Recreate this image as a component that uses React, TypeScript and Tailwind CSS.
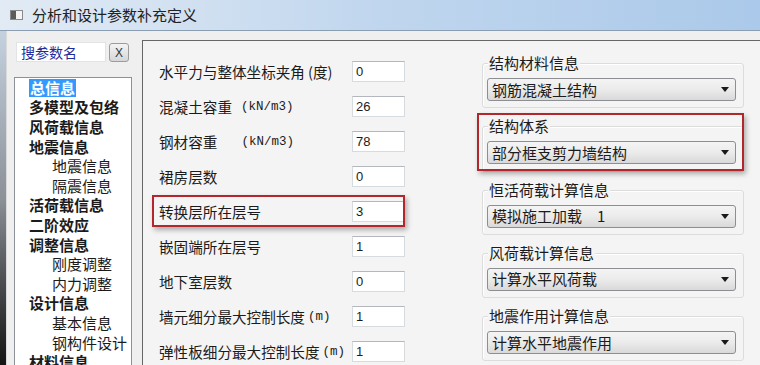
import React from 'react'

const cjk = "font-['Microsoft_YaHei','Noto_Sans_CJK_SC',sans-serif]"

const tree: { label: string; sub?: boolean; active?: boolean }[] = [
  { label: '总信息', active: true },
  { label: '多模型及包络' },
  { label: '风荷载信息' },
  { label: '地震信息' },
  { label: '地震信息', sub: true },
  { label: '隔震信息', sub: true },
  { label: '活荷载信息' },
  { label: '二阶效应' },
  { label: '调整信息' },
  { label: '刚度调整', sub: true },
  { label: '内力调整', sub: true },
  { label: '设计信息' },
  { label: '基本信息', sub: true },
  { label: '钢构件设计', sub: true },
  { label: '材料信息' },
]

const rows: { label: string; unit?: string; value: string; mark?: boolean }[] = [
  { label: '水平力与整体坐标夹角', unit: '(度)', value: '0' },
  { label: '混凝土容重', unit: '(kN/m3)', value: '26' },
  { label: '钢材容重', unit: '(kN/m3)', value: '78' },
  { label: '裙房层数', value: '0' },
  { label: '转换层所在层号', value: '3', mark: true },
  { label: '嵌固端所在层号', value: '1' },
  { label: '地下室层数', value: '0' },
  { label: '墙元细分最大控制长度', unit: '(m)', value: '1' },
  { label: '弹性板细分最大控制长度', unit: '(m)', value: '1' },
]

const groups: { title: string; value: string; mark?: boolean }[] = [
  { title: '结构材料信息', value: '钢筋混凝土结构' },
  { title: '结构体系', value: '部分框支剪力墙结构', mark: true },
  { title: '恒活荷载计算信息', value: '模拟施工加载　1' },
  { title: '风荷载计算信息', value: '计算水平风荷载' },
  { title: '地震作用计算信息', value: '计算水平地震作用' },
]

const Arrow = () => (
  <svg width="8" height="5" viewBox="0 0 8 5" className="shrink-0">
    <path d="M0 0H8L4 5Z" fill="#1a1a1a" />
  </svg>
)

const unitClass = (label: string, unit: string) => {
  if (unit === '(度)') return `ml-[3px] ${cjk} text-[14.6px]`
  if (unit === '(m)') return "ml-[3px] font-['Liberation_Mono',monospace] text-[12.5px]"
  return `font-['Liberation_Mono',monospace] text-[12.5px] ${label.length === 4 ? 'ml-[24px]' : 'ml-[9px]'}`
}

export default function App() {
  return (
    <div className={`flex h-[365px] w-[760px] flex-col overflow-hidden bg-[#efefef] text-[#1b1b1b] ${cjk}`}>
      {/* title bar */}
      <div className="flex h-[31px] shrink-0 items-center border-b border-[#8b9db1] bg-gradient-to-r from-[#e2ebf4] via-[#c0d6ee] to-[#abc9ea] pl-[10px]">
        <div className="flex h-[10px] w-[13px] border border-[#8a8a8a] bg-[#f4f4f4]">
          <div className="w-[5px] bg-[#5c5c5c]" />
        </div>
        <span className="ml-[9px] text-[15px] leading-[20px] text-[#222]">分析和设计参数补充定义</span>
      </div>

      <div className="flex min-h-0 flex-1">
        {/* window frame edge */}
        <div className="w-[7px] shrink-0 border-r border-[#d9d9d9] bg-gradient-to-b from-[#c4d2e0] via-[#8d9198] to-[#141414]" />

        {/* left tree column */}
        <div className="flex w-[135px] shrink-0 flex-col pl-[7px]">
          <div className="mt-[11px] flex items-start">
            <div className="ml-[2px] flex h-[20px] w-[90px] items-center border border-[#e3e3e3] bg-white pl-[4px] text-[14px] text-[#1c2c9c]">
              搜参数名
            </div>
            <div className="ml-[3px] mt-[1px] flex h-[19px] w-[20px] items-center justify-center rounded-[3px] border border-[#9c9c9c] bg-gradient-to-b from-[#f4f4f4] to-[#d6d6d6] font-['Liberation_Sans',sans-serif] text-[12px] text-[#333]">
              X
            </div>
          </div>
          <div className="mt-[15px] flex w-[118px] flex-1 flex-col border-l border-t border-r border-[#8d9299] bg-white">
            {tree.map((t, i) => (
              <div
                key={i}
                className={`flex h-[19.6px] shrink-0 items-center text-[15px] leading-[18px] ${t.sub ? 'pl-[37px] font-normal' : 'pl-[14px] font-bold'}`}
              >
                <span className={t.active ? 'bg-[#3399ff] px-[1px] text-white' : ''}>{t.label}</span>
              </div>
            ))}
          </div>
        </div>

        {/* main panel */}
        <div className="mt-[9px] flex flex-1 border-l border-t border-[#676767] bg-[#f4f4f4]">
          <div className="flex flex-col pl-[16px] pt-[13px]">
            {rows.map((r, i) => (
              <div key={i} className="relative flex h-[35px] shrink-0 items-center">
                {r.mark && (
                  <div className="absolute left-[-7px] top-[1px] h-[32px] w-[253px] border-2 border-[#b3262b] shadow-[2px_3px_5px_rgba(0,0,0,0.3)]" />
                )}
                <div className="flex w-[193px] items-center text-[14.6px] leading-[20px]">
                  <span>{r.label}</span>
                  {r.unit && <span className={unitClass(r.label, r.unit)}>{r.unit}</span>}
                </div>
                <div className="flex h-[21px] w-[53px] items-center border border-[#d6dbe0] border-t-[#b4b7bd] bg-white pl-[3px] font-['Liberation_Sans',sans-serif] text-[13px]">
                  {r.value}
                </div>
              </div>
            ))}
          </div>

          <div className="ml-[77px] flex flex-col pt-[22px]">
            {groups.map((g, i) => (
              <div
                key={i}
                className="relative mb-[18px] h-[45.3px] w-[262px] shrink-0 rounded-[3px] border border-[#dcdcdc] shadow-[inset_1px_1px_0_#ffffff]"
              >
                {g.mark && (
                  <div className="absolute left-[-6px] top-[-14px] h-[58px] w-[267px] border-2 border-[#b3262b] shadow-[2px_3px_5px_rgba(0,0,0,0.3)]" />
                )}
                <div className="-mt-[11px] ml-[5px] w-fit bg-[#f4f4f4] px-[1px] text-[15px] leading-[20px]">{g.title}</div>
                <div className="ml-[4px] mt-[5px] flex h-[23px] w-[249px] items-center justify-between rounded-[3px] border border-[#8c8e91] bg-gradient-to-b from-[#f4f4f4] via-[#ebebeb] to-[#d9d9d9] pl-[4px] pr-[6px] text-[15px] leading-[20px]">
                  <span>{g.value}</span>
                  <Arrow />
                </div>
              </div>
            ))}
          </div>
        </div>
      </div>
    </div>
  )
}
